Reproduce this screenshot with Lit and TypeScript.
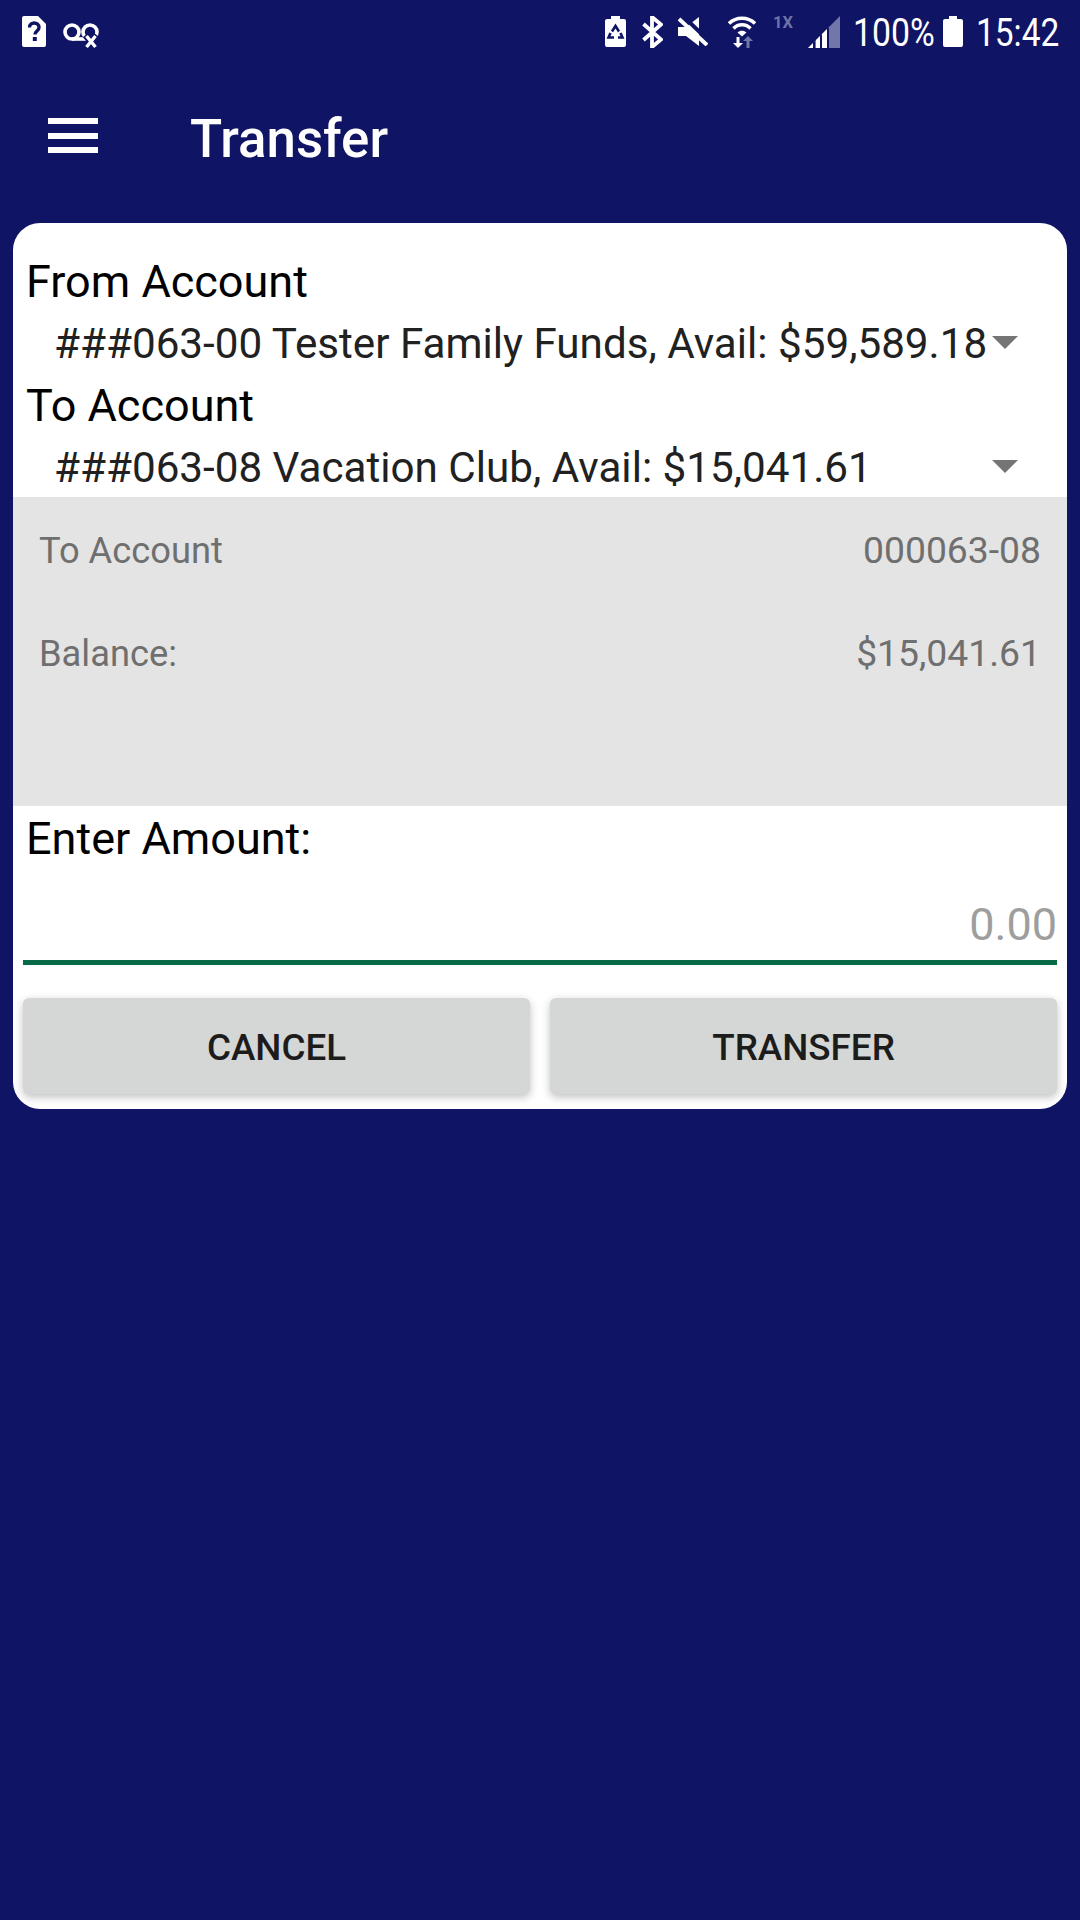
import { LitElement, html, css } from "lit";
import { customElement } from "lit/decorators.js";

const arrow = html`<svg class="arrow" viewBox="0 0 26 14"><path d="M0 0H26L13 13Z" fill="#757575"/></svg>`;

@customElement("app-root")
export class AppRoot extends LitElement {
  static styles = css`
    :host { display: block; width: 1080px; height: 1920px; background: #0f1464; font-family: Roboto, "Noto Sans", sans-serif; overflow: hidden; }
    .status { height: 64px; display: flex; align-items: flex-start; padding: 16px 20px 0 22px; box-sizing: border-box; color: #fff; }
    .status svg { display: block; flex: none; }
    .left { display: flex; gap: 17px; }
    .right { margin-left: auto; display: flex; align-items: flex-start; }
    .st { font-size: 38px; line-height: 32px; margin-top: 1px; transform-origin: left; white-space: nowrap; }
    .pct { margin-left: 13px; margin-right: 9px; width: 81px; transform: scaleX(0.89); }
    .time { margin-left: 13px; width: 84px; transform: scaleX(0.88); }
    .x1 { margin-left: 17px; margin-right: 14px; font: 700 16.500px/13px Roboto, sans-serif; color: #6f73a6; width: 21px; }
    .bar { height: 159px; display: flex; align-items: center; padding-left: 48px; padding-bottom: 16px; box-sizing: border-box; color: #fff; }
    .menu { display: flex; flex-direction: column; gap: 8.500px; width: 50px; margin-right: 92px; }
    .menu i { display: block; height: 6px; background: #fff; }
    .title { font-size: 52.800px; font-weight: 500; margin-top: 6px; }
    .card { margin: 0 13px; background: #fff; border-radius: 27px; height: 886px; padding-top: 27px; box-sizing: border-box; display: flex; flex-direction: column; }
    .label { height: 62px; line-height: 64px; font-size: 45px; color: #000; padding-left: 13px; flex: none; }
    .select { height: 62px; display: flex; align-items: center; font-size: 42.200px; color: #212121; padding-left: 41px; position: relative; flex: none; white-space: nowrap; }
    .arrow { position: absolute; left: 979px; top: 24px; width: 26px; height: 14px; }
    .info { height: 309px; background: #e4e4e4; padding: 23px 26px 0; box-sizing: border-box; color: #6f6f6f; font-size: 36.300px; flex: none; margin-top: -1px; }
    .row { display: flex; justify-content: space-between; height: 62px; line-height: 61px; margin-bottom: 41px; padding: 0 0 0 0; }
    .row span + span { font-size: 37.300px; }
    .label.amt { margin-top: 1px; }
    .amount { height: 96px; box-sizing: border-box; margin: 0 10px; border-bottom: 5px solid #066a46; text-align: right; font-size: 45px; color: #9e9e9e; line-height: 112px; }
    .btns { display: flex; gap: 20px; margin: 33px 10px 0; }
    button { flex: 1; height: 96px; border: 0; border-radius: 6px; background: #d5d7d6; color: #1c1c1c; font: 500 36.800px Roboto, sans-serif; box-shadow: 0 3px 8px rgba(0,0,0,.25); padding: 2px 0 0; }
  `;

  render() {
    return html`
      <div class="status">
        <div class="left">
          <svg width="24" height="31" viewBox="0 0 24 31"><path d="M2 0H16L24 8V29a2 2 0 0 1-2 2H2a2 2 0 0 1-2-2V2a2 2 0 0 1 2-2Z" fill="#fff"/><path d="M7.500 11.500c0-6 9.500-6 9.500 0 0 3.500-4 3.500-4 7" fill="none" stroke="#0f1464" stroke-width="3.400"/><rect x="10.800" y="21" width="4" height="4" fill="#0f1464"/></svg>
          <svg width="36" height="26" viewBox="0 0 36 26" style="margin-top:7px"><g fill="none" stroke="#fff" stroke-width="3.600"><circle cx="9" cy="9" r="7"/><circle cx="27" cy="9" r="7"/><path d="M9 16H27"/></g><path d="M22.500 12L33.500 25M33.500 12L22.500 25" stroke="#0f1464" stroke-width="7"/><path d="M23.500 13L32.500 24M32.500 13L23.500 24" stroke="#fff" stroke-width="3.400"/></svg>
        </div>
        <div class="right">
          <svg width="21" height="31" viewBox="0 0 21 31"><path d="M6 0H15V3H19a2 2 0 0 1 2 2V29a2 2 0 0 1-2 2H2a2 2 0 0 1-2-2V5a2 2 0 0 1 2-2H6Z" fill="#fff"/><g fill="none" stroke="#0f1464" stroke-width="2.600"><path d="M7 15.500L10.500 10L14 15.500"/><path d="M15.500 17L17.500 21.500H13"/><path d="M5.500 17L3.500 21.500H9"/></g></svg>
          <svg width="21" height="32" viewBox="0 0 21 32" style="margin-left:16px"><path d="M1.500 8L19 23.500L10 31V1L19 8.500L1.500 24" fill="none" stroke="#fff" stroke-width="3.800"/></svg>
          <svg width="30" height="29" viewBox="0 0 30 29" style="margin-left:15px;margin-top:1px"><path d="M0 10H8L21 0V29L8 19H0Z" fill="#fff"/><path d="M6 0L30 23" stroke="#0f1464" stroke-width="4"/><path d="M1 2L29 28" stroke="#fff" stroke-width="4"/></svg>
          <svg width="28" height="32" viewBox="0 0 28 32" style="margin-left:20px"><g fill="none" stroke="#fff" stroke-width="3.400"><path d="M1 7.500C8 .5 20 .5 27 7.500"/><path d="M5.500 12.500C10 7.500 18 7.500 22.500 12.500"/></g><path d="M9.500 16.500C12 14 16 14 18.500 16.500L14 20.500Z" fill="#fff"/><path d="M10 21V29" stroke="#fff" stroke-width="3"/><path d="M5 27H15L10 32Z" fill="#fff"/><path d="M20 32V24" stroke="#7276a8" stroke-width="3"/><path d="M15 25H25L20 20Z" fill="#7276a8"/></svg>
          <span class="x1">1X</span>
          <svg width="32" height="32" viewBox="0 0 32 32"><path d="M0 32L32 0V32Z" fill="#7276a8"/><path d="M0 32L6 26V32ZM8 32V24L12 20V32ZM14 32V18L19 13V32Z" fill="#fff"/><path d="M6 32V26M13 32V19M20 32V12" stroke="#0f1464" stroke-width="2"/></svg>
          <span class="st pct">100%</span>
          <svg width="20" height="31" viewBox="0 0 20 31"><path d="M6 0H14V3H18a2 2 0 0 1 2 2V29a2 2 0 0 1-2 2H2a2 2 0 0 1-2-2V5a2 2 0 0 1 2-2H6Z" fill="#fff"/></svg>
          <span class="st time">15:42</span>
        </div>
      </div>
      <div class="bar">
        <div class="menu"><i></i><i></i><i></i></div>
        <div class="title">Transfer</div>
      </div>
      <div class="card">
        <div class="label">From Account</div>
        <div class="select">###063-00 Tester Family Funds, Avail: $59,589.18${arrow}</div>
        <div class="label">To Account</div>
        <div class="select">###063-08 Vacation Club, Avail: $15,041.61${arrow}</div>
        <div class="info">
          <div class="row"><span>To Account</span><span>000063-08</span></div>
          <div class="row"><span>Balance:</span><span>$15,041.61</span></div>
        </div>
        <div class="label amt">Enter Amount:</div>
        <div class="amount">0.00</div>
        <div class="btns"><button>CANCEL</button><button>TRANSFER</button></div>
      </div>
    `;
  }
}
